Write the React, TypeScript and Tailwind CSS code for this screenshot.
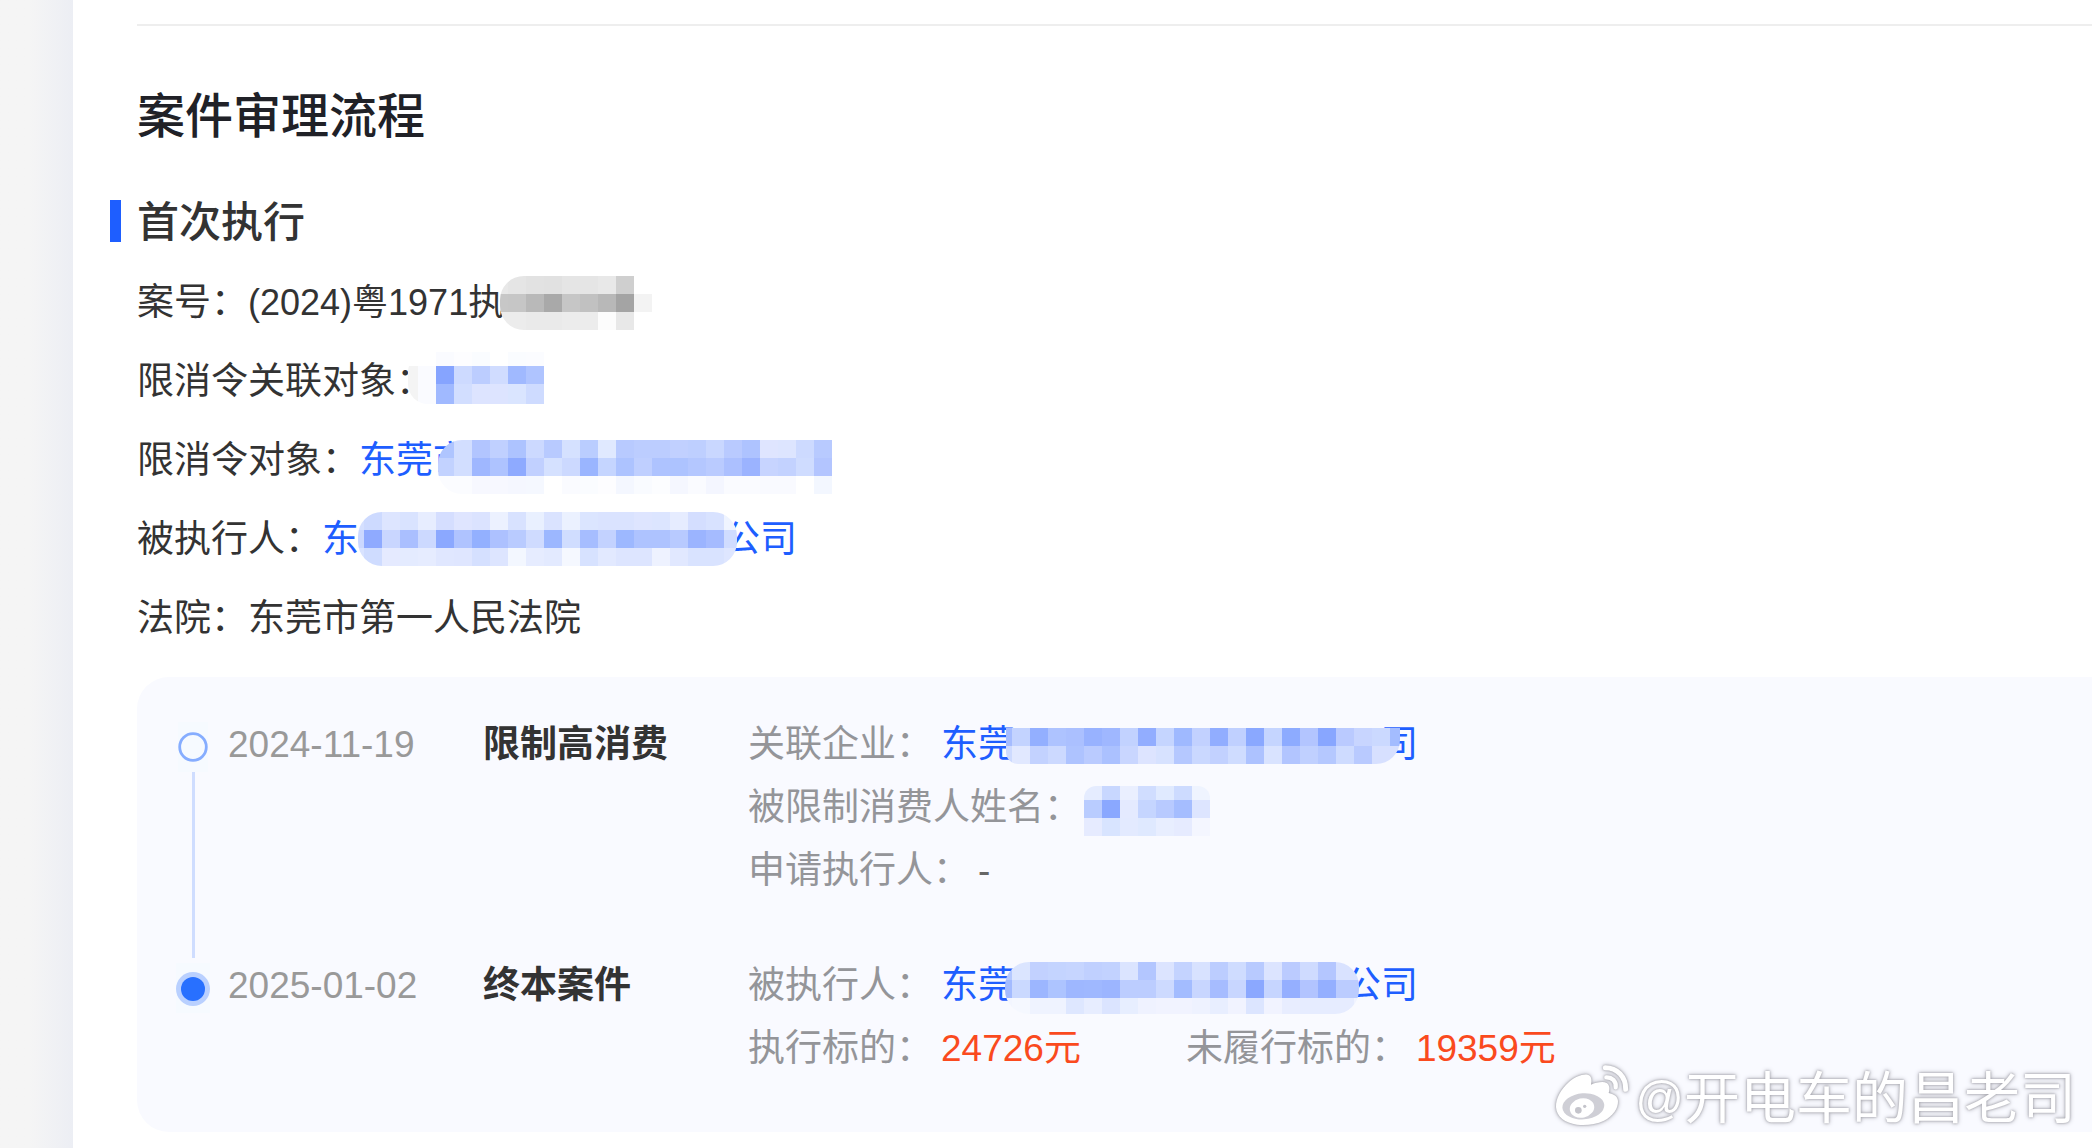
import type { ReactNode } from 'react'

interface MosaicData {
  lead: number
  width: number
  heights: number[]
  rows: string[]
}

const CELL = 18

const caseNumberMosaic: MosaicData = {
  lead: 8,
  width: 152,
  heights: [18, 18, 18],
  rows: [
    'e8e8e8 e5e5e5 e2e2e2 e1e1e1 e5e5e5 e5e5e5 e8e8e8 cfcfcf ffffff',
    'c7c7c7 c6c6c6 b9b9b9 a9a9a9 c6c6c6 c1c1c1 b8b8b8 a4a4a4 f3f3f3',
    'ececec ececec eaeaea eaeaea ececec ececec fcfcfc e8e8e8 ffffff',
  ],
}

const relatedMosaic: MosaicData = {
  lead: 10,
  width: 136,
  heights: [14, 18, 20],
  rows: [
    'ffffff ffffff fafbff fdfdff fafcff ffffff fafcff fbfcff',
    'f4f4f4 fafbff 86a4ff cddaff bccdff d0dcff a0b9ff afc4ff',
    'f4f4f4 fafbff a0b9ff d2deff dde4ff dde4ff dae5ff cedbff',
  ],
}

const targetMosaic: MosaicData = {
  lead: 16,
  width: 394,
  heights: [18, 18, 18],
  rows: [
    'afc5ff d2deff b2c5ff c0d0ff adc3ff ccd9ff b8caff d5e1ff bacdff e0e9ff b8caff bccdff bccdff c1d0ff becfff c9d7ff b9caff aec3ff dfe5ff dde5ff cddaff b8caff',
    'c2d2ff d2deff 9fb7ff aec3ff 8eaaff c1d0ff d5e1ff ccd9ff 9ab5ff c5d5ff adc3ff bfcfff aec3ff adc3ff b4c7ff bacbff acc0ff 9bb3ff c7d4ff c3d2ff cfdcff b3c5ff',
    'fbfcff fbfcff f7f8ff f7f8ff f5f7ff f5f8ff ffffff fafbff fafcff fdfdff f4f7ff f9fbff fcfdff f5f7ff fafbff f4f6ff fafbff fafbff f9faff f9faff ffffff f3f7ff',
  ],
}

const debtorMosaic: MosaicData = {
  lead: 6,
  width: 379,
  heights: [18, 18, 18],
  rows: [
    'd5e0ff cddaff dde5ff d9e3ff e7edff d5deff dfe5ff dbe3ff ecf1ff d8e2ff e9f0ff dae3ff ebf1ff dbe5ff dae3ff dae3ff dee5ff dce5ff e6ecff d4deff d8e2ff eff4ff',
    'cbd8ff 8faaff c9d6ff aabfff ccd9ff 8ba8ff afc3ff 93b0ff adc1ff b9cbff cfdbff 9cb7ff d0ddff a6bdff c3d2ff 9db8ff aec3ff aec3ff b8caff 9bb4ff a5bbff d0dcff',
    'd9e3ff cfdcff e5eaff e4ebff e6ecff e0e7ff dfe6ff d5e0ff dde5ff f3f7ff e6ecff e3eaff f5f8ff d7e2ff e2e9ff dde5ff dde5ff eef2ff e1e8ff d9e3ff d9e3ff dee6ff',
  ],
}

const companyMosaic: MosaicData = {
  lead: 6,
  width: 394,
  heights: [18, 18],
  rows: [
    'a5bcff c3d3ff 93afff aec3ff abc0ff 98b2ff 9fb7ff c2d2ff 92adff c5d5ff 9fb9ff c2d1ff 91adff c0d0ff 8aa8ff c5d5ff 8dabff b3c5ff 88a6ff bacaff c8d5ff cbd9ff a3bcff',
    'cddaff e1e8ff c3d2ff ccd9ff aec3ff bacbff abc1ff c9d6ff dde4ff d7e2ff b5c8ff cad8ff c2d1ff cfdcff adc2ff d9e3ff b2c5ff c0d0ff b5c8ff cedbff b9caff d7e0ff d7e0ff',
  ],
}

const personMosaic: MosaicData = {
  lead: 18,
  width: 126,
  heights: [14, 18, 18],
  rows: [
    'e5ecff c8d7ff eaefff d0ddff e0eaff cddbff eff4ff',
    'b9ccff 8aa8ff e4eaff c5d5ff b8caff a5bdff dde5ff',
    'e6ebff d8e4ff e3eaff dfe9ff e8eeff e6ebff f4f6ff',
  ],
}

const closedMosaic: MosaicData = {
  lead: 7,
  width: 354,
  heights: [18, 18, 16],
  rows: [
    'b5c9ff dbe5ff c2d1ff c4d4ff c6d5ff c0d0ff c2d2ff dbe4ff b3c6ff dce4ff c4d3ff d8e2ff bccdff cfdcff b8caff dce4ff bbcbff cfdbff b4c6ff d9e2ff d9e2ff',
    'a3bbff cad9ff 9cb6ff adc4ff 9eb7ff 9fb8ff 9cb5ff bccdff bccdff cddaff a3bcff c8d6ff a6bcff c8d6ff 8ba8ff c6d5ff 95afff b2c4ff 94afff bbccff bbccff',
    'f3f6ff f5f8ff eff3ff eff3ff dee7ff e7edff dbe4ff e7eeff eff2ff f1f3ff f1f3ff eef2ff e8eeff f1f3ff dce5ff f1f3ff e8edff e6ecff e6ecff e6ecff f0f3ff',
  ],
}

const Mosaic = ({ data, className }: { data: MosaicData; className: string }) => {
  const { lead, width, heights, rows } = data
  const total = heights.reduce((a, b) => a + b, 0)

  return (
    <svg
      width={width}
      height={total}
      shapeRendering="crispEdges"
      aria-hidden="true"
      className={`absolute max-w-none overflow-hidden ${className}`}
    >
      {rows.map((row, r) => {
        const y = heights.slice(0, r).reduce((a, b) => a + b, 0)
        return row.split(' ').map((color, c) => (
          <rect
            key={`${r}-${c}`}
            x={c === 0 ? 0 : lead + (c - 1) * CELL}
            y={y}
            width={c === 0 ? lead : CELL}
            height={heights[r]}
            fill={`#${color}`}
          />
        ))
      })}
    </svg>
  )
}

const WeiboLogo = () => (
  <svg width="74" height="62" viewBox="30 30 222 186" fill="currentColor" aria-hidden="true">
    <path d="M33 160C32 132 48 106 72 84C92 67 116 58 130 63C139 67 141 77 138 92C152 86 174 81 185 87C194 93 195 104 191 117C205 121 218 126 219 141C220 164 203 187 177 200C152 212 122 215 96 212C60 207 35 189 33 160Z" />
    <ellipse cx="115" cy="157" rx="63" ry="39" transform="rotate(-4 115 157)" fill="#cfcfd6" />
    <ellipse cx="111" cy="162" rx="37" ry="29" transform="rotate(-12 111 162)" />
    <circle cx="100" cy="169" r="10" fill="#c4c4cb" />
    <circle cx="119" cy="157" r="5" fill="#c4c4cb" />
    <path d="M181 41C216 41 243 68 242 106" fill="none" stroke="currentColor" strokeWidth="15" strokeLinecap="round" />
    <path d="M184 70C202 70 214 82 212 100" fill="none" stroke="currentColor" strokeWidth="13" strokeLinecap="round" />
  </svg>
)

const InfoRow = ({ label, children }: { label: string; children?: ReactNode }) => (
  <div className="relative flex h-[79px] items-center pt-[3px]">
    <dt>{label}：</dt>
    <dd className="flex">{children}</dd>
  </div>
)

const Detail = ({ label, children }: { label: string; children?: ReactNode }) => (
  <div className="flex h-[63px] items-center gap-2">
    <dt className="pt-[2px] text-[#949599]">{label}：</dt>
    <dd className="relative flex h-full items-center pt-[2px]">{children}</dd>
  </div>
)

interface StepProps {
  date: string
  title: string
  active?: boolean
  children: ReactNode
}

const Step = ({ date, title, active, children }: StepProps) => (
  <li className="flex">
    <div className="ml-[38px] mr-[17px] flex w-9 shrink-0 flex-col items-center pt-[10px]">
      <svg width="36" height="50" viewBox="0 0 36 50" aria-hidden="true">
        <rect x={active ? 1 : 3} width={active ? 34 : 30} height="50" fill="#f6faff" />
        {active ? (
          <>
            <circle cx="18" cy="26" r="17" fill="#b9d0ff" />
            <circle cx="18" cy="26" r="12" fill="#2870ff" />
          </>
        ) : (
          <circle cx="18" cy="25" r="13.3" fill="#f6faff" stroke="#86adff" strokeWidth="2.8" />
        )}
      </svg>
      {!active && <div className="-mb-[5px] w-[3px] flex-1 bg-[#cfddff]" />}
    </div>
    <time className="w-[255px] shrink-0 leading-[65px] text-[#999999]">{date}</time>
    <h3 className="w-[265px] shrink-0 font-bold leading-[65px]">{title}</h3>
    <dl className={active ? '' : 'pb-[52px]'}>{children}</dl>
  </li>
)

export default function App() {
  return (
    <div className="relative flex min-h-screen overflow-hidden bg-white font-['Liberation_Sans','Noto_Sans_CJK_SC',sans-serif] text-[37px] leading-[54px] text-[#333333]">
      <div className="w-[73px] shrink-0 bg-linear-to-r from-[#f5f5f5] from-40% to-[#eceef4]" />

      <main className="flex-1 pb-4 pl-16 pt-6">
        <hr className="border-t-2 border-[#eeeeee]" />

        <h1 className="mt-[61px] text-[48px] font-medium leading-[60px] text-[#202127]">案件审理流程</h1>

        <h2 className="-ml-[27px] mt-[53px] flex h-[42px] items-stretch gap-4 text-[42px] font-medium leading-[46px]">
          <span className="w-[11px] bg-[#1e5eff]" />
          首次执行
        </h2>

        <dl className="mt-5">
          <InfoRow label="案号">
            <span className="text-[36px]">(2024)粤1971执</span>
            <Mosaic data={caseNumberMosaic} className="left-[363px] top-[14px] rounded-l-[24px]" />
          </InfoRow>
          <InfoRow label="限消令关联对象">
            <Mosaic data={relatedMosaic} className="left-[271px] top-[11px] rounded-l-[20px]" />
          </InfoRow>
          <InfoRow label="限消令对象">
            <a href="#" className="text-[#1e5eff]">东莞市</a>
            <Mosaic data={targetMosaic} className="left-[301px] top-5 rounded-l-[24px]" />
          </InfoRow>
          <InfoRow label="被执行人">
            <a href="#" className="flex gap-[364px] text-[#1e5eff]">
              <span>东</span>
              <span>公司</span>
            </a>
            <Mosaic data={debtorMosaic} className="left-[221px] top-[13px] rounded-[24px]" />
          </InfoRow>
          <InfoRow label="法院">东莞市第一人民法院</InfoRow>
        </dl>

        {/* Timeline */}
        <ol className="mt-5 rounded-l-[32px] bg-[#f9faff] pb-[53px] pt-[35px]">
          <Step date="2024-11-19" title="限制高消费">
            <Detail label="关联企业">
              <a href="#" className="flex gap-[366px] text-[#1e5eff]">
                <span>东莞</span>
                <span>司</span>
              </a>
              <Mosaic data={companyMosaic} className="left-[65px] top-4 rounded-bl-[12px] rounded-br-[24px]" />
            </Detail>
            <Detail label="被限制消费人姓名">
              <Mosaic data={personMosaic} className="-left-[5px] top-[11px] rounded-t-[12px]" />
            </Detail>
            <Detail label="申请执行人">
              <span className="text-[#666666]">-</span>
            </Detail>
          </Step>
          <Step date="2025-01-02" title="终本案件" active>
            <Detail label="被执行人">
              <a href="#" className="flex gap-[329px] text-[#1e5eff]">
                <span>东莞</span>
                <span>公司</span>
              </a>
              <Mosaic data={closedMosaic} className="left-[64px] top-[9px] rounded-[24px]" />
            </Detail>
            <div className="flex gap-[105px]">
              <Detail label="执行标的">
                <span className="text-[#fa4a1e]">24726元</span>
              </Detail>
              <Detail label="未履行标的">
                <span className="text-[#fa4a1e]">19359元</span>
              </Detail>
            </div>
          </Step>
        </ol>
      </main>

      {/* Weibo watermark */}
      <div className="absolute bottom-[17px] right-4 flex items-start gap-[6px] text-[56px] leading-[64px] text-white [filter:drop-shadow(0_0_1px_#a0a0a8)_drop-shadow(0_0_2px_#b8b8c0)]">
        <WeiboLogo />
        <p className="flex items-center pt-[3px]">
          <span className="text-[48px]">@</span>
          <span>开电车的昌老司</span>
        </p>
      </div>
    </div>
  )
}
